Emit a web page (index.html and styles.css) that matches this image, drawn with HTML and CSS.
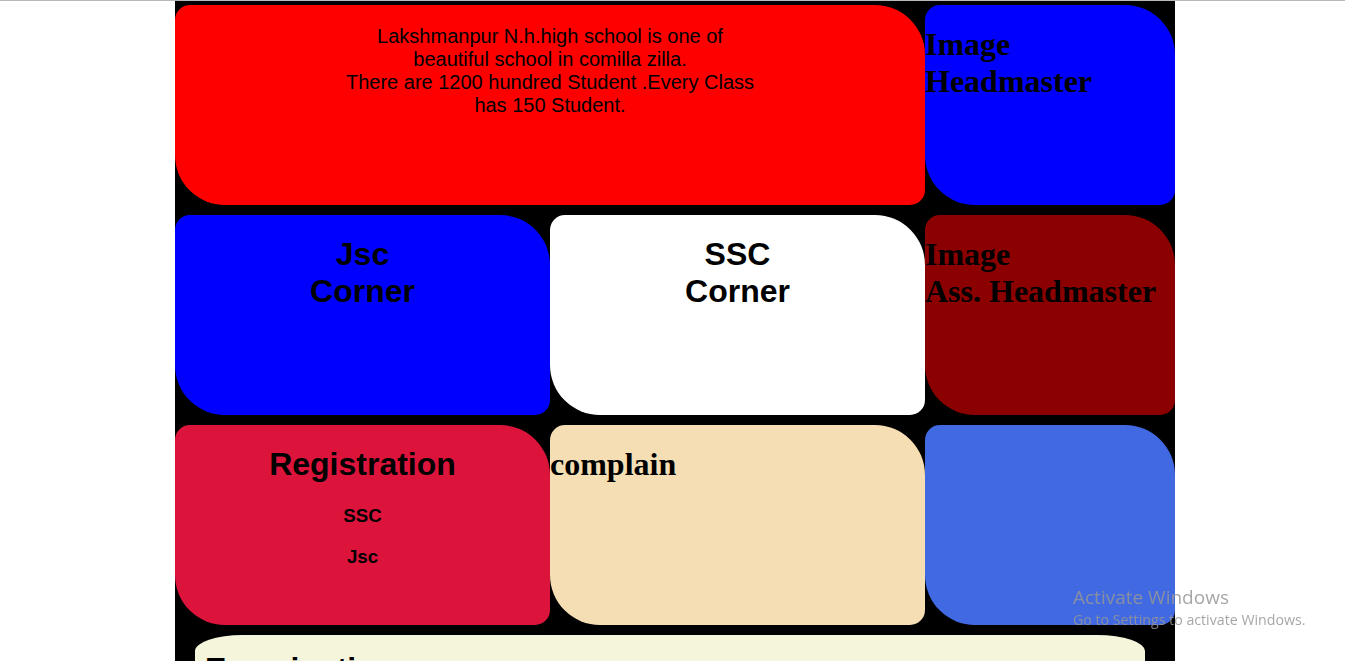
FILE: index.html
```html
<!DOCTYPE html>
<html lang="en">
<head>
<meta charset="utf-8">
<title>Lakshmanpur N.h.high school</title>
<link rel="stylesheet" href="styles.css">
</head>
<body>
<div class="page">
  <div class="grid">
    <div class="card card-red span-2">
      <p class="intro">Lakshmanpur N.h.high school is one of beautiful school in comilla zilla.<br>There are 1200 hundred Student .Every Class has 150 Student.</p>
    </div>
    <div class="card card-blue">
      <h1 class="title-serif">Image Headmaster</h1>
    </div>
    <div class="card card-blue">
      <h1 class="title-sans">Jsc<br>Corner</h1>
    </div>
    <div class="card card-white">
      <h1 class="title-sans">SSC<br>Corner</h1>
    </div>
    <div class="card card-darkred">
      <h1 class="title-serif">Image<br>Ass. Headmaster</h1>
    </div>
    <div class="card card-crimson">
      <h1 class="title-sans">Registration</h1>
      <h3 class="sub-sans">SSC</h3>
      <h3 class="sub-sans">Jsc</h3>
    </div>
    <div class="card card-wheat">
      <h1 class="title-serif">complain</h1>
    </div>
    <div class="card card-royal"></div>
  </div>
  <div class="notice">
    <h1 class="notice-title">Examination</h1>
  </div>
</div>
<div class="watermark">
  <div class="wm-big">Activate Windows</div>
  <div class="wm-small">Go to Settings to activate Windows.</div>
</div>
</body>
</html>
```
FILE: styles.css
```css
html, body {
  margin: 0;
  padding: 0;
  background: #ffffff;
}
body {
  border-top: 1px solid #bababa;
  font-family: "Liberation Sans", Arial, sans-serif;
  color: #000;
}
.page {
  width: 1000px;
  margin-left: 175px;
  background: #000000;
  padding-top: 4px;
  padding-bottom: 40px;
}
.grid {
  display: grid;
  grid-template-columns: 375px 375px 250px;
  grid-auto-rows: 200px;
  row-gap: 10px;
}
.span-2 { grid-column: span 2; }
.card {
  border-radius: 15px 50px;
  overflow: hidden;
  display: flow-root;
}
.card-red { background: #ff0000; }
.card-blue { background: #0000ff; }
.card-white { background: #ffffff; }
.card-darkred { background: #8b0000; }
.card-crimson { background: #dc143c; }
.card-wheat { background: #f5deb3; }
.card-royal { background: #4169e1; }

.intro {
  font-family: "Liberation Sans", Arial, sans-serif;
  font-size: 20px;
  line-height: 23px;
  text-align: center;
  max-width: 415px;
  margin: 20px auto;
}
.title-serif {
  font-family: "Liberation Serif", "Times New Roman", serif;
  font-size: 32px;
  font-weight: bold;
  margin: 21.44px 0;
  text-align: left;
}
.title-sans {
  font-family: "Liberation Sans", Arial, sans-serif;
  font-size: 32px;
  font-weight: bold;
  margin: 21.44px 0;
  text-align: center;
}
.sub-sans {
  font-family: "Liberation Sans", Arial, sans-serif;
  font-size: 18.72px;
  font-weight: bold;
  margin: 18.72px 0;
  text-align: center;
}
.notice {
  box-sizing: border-box;
  width: 950px;
  margin: 10px 0 0 20px;
  height: 320px;
  background: #f5f5dc;
  border-radius: 5%;
  display: flow-root;
  padding: 0 10px;
}
.notice-title {
  font-family: "Liberation Sans", Arial, sans-serif;
  font-size: 32px;
  font-weight: bold;
  margin: 16px 0;
}
.watermark {
  position: fixed;
  left: 1073px;
  top: 584px;
  font-family: "Open Sans", "Noto Sans", sans-serif;
  color: rgba(150, 150, 150, 0.85);
  pointer-events: none;
}
.wm-big {
  font-size: 19px;
  line-height: 26px;
}
.wm-small {
  font-size: 14.2px;
  line-height: 20px;
}
```
